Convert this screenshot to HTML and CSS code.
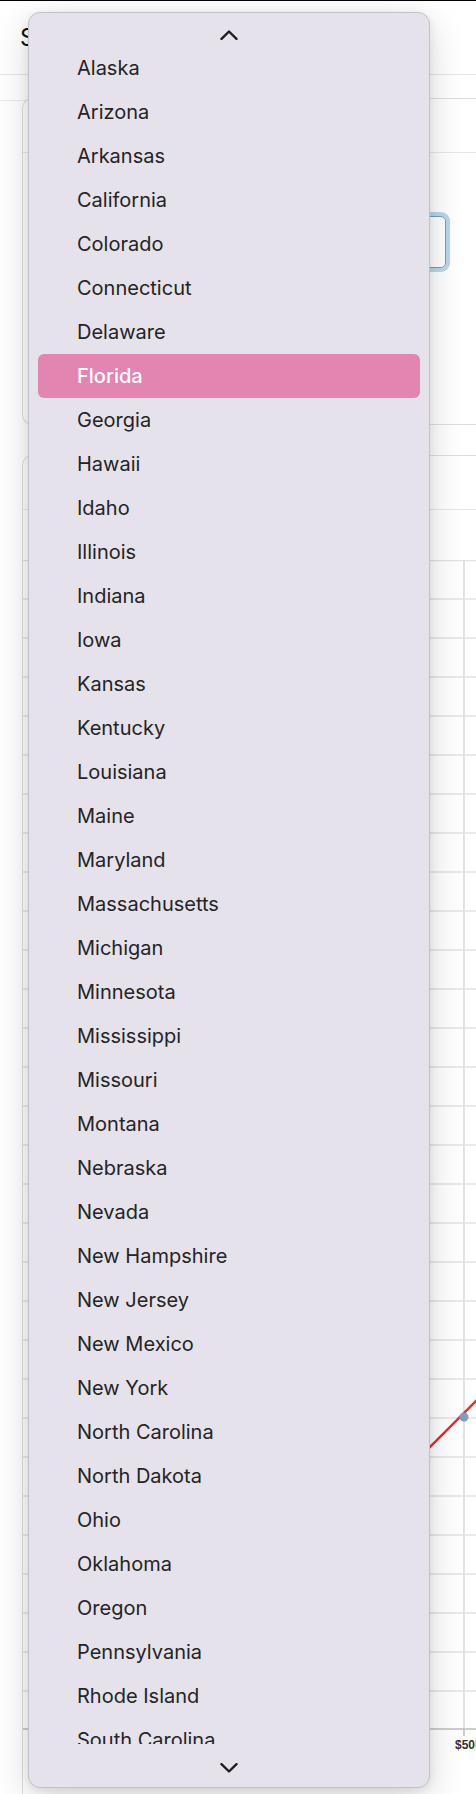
FILE: index.html
```html
<!DOCTYPE html>
<html lang="en">
<head>
<meta charset="utf-8">
<title>State Salary Comparison</title>
<link rel="stylesheet" href="styles.css">
</head>
<body>
<div class="page">
  <header class="topbar"><h1 class="title">State Salary Comparison</h1></header>
  <nav class="subbar"></nav>
  <main class="content">
    <section class="card card-filters">
      <div class="card-head"></div>
      <div class="filter-row">
        <div class="select-box">Florida</div>
      </div>
    </section>
    <section class="card card-chart">
      <div class="card-head card-head-chart"></div>
      <div class="chart">
        <svg class="chart-svg" width="460" height="1200" viewBox="0 0 460 1200">
          <g class="grid-h" stroke="#e2e2e2" stroke-width="1.5">
            <line x1="0" y1="0.5" x2="460" y2="0.5"/>
            <line x1="0" y1="39" x2="460" y2="39"/>
            <line x1="0" y1="78" x2="460" y2="78"/>
            <line x1="0" y1="117" x2="460" y2="117"/>
            <line x1="0" y1="156" x2="460" y2="156"/>
            <line x1="0" y1="195" x2="460" y2="195"/>
            <line x1="0" y1="234" x2="460" y2="234"/>
            <line x1="0" y1="273" x2="460" y2="273"/>
            <line x1="0" y1="312" x2="460" y2="312"/>
            <line x1="0" y1="351" x2="460" y2="351"/>
            <line x1="0" y1="390" x2="460" y2="390"/>
            <line x1="0" y1="429" x2="460" y2="429"/>
            <line x1="0" y1="468" x2="460" y2="468"/>
            <line x1="0" y1="507" x2="460" y2="507"/>
            <line x1="0" y1="546" x2="460" y2="546"/>
            <line x1="0" y1="585" x2="460" y2="585"/>
            <line x1="0" y1="624" x2="460" y2="624"/>
            <line x1="0" y1="663" x2="460" y2="663"/>
            <line x1="0" y1="702" x2="460" y2="702"/>
            <line x1="0" y1="741" x2="460" y2="741"/>
            <line x1="0" y1="780" x2="460" y2="780"/>
            <line x1="0" y1="819" x2="460" y2="819"/>
            <line x1="0" y1="858" x2="460" y2="858"/>
            <line x1="0" y1="897" x2="460" y2="897"/>
            <line x1="0" y1="936" x2="460" y2="936"/>
            <line x1="0" y1="975" x2="460" y2="975"/>
            <line x1="0" y1="1014" x2="460" y2="1014"/>
            <line x1="0" y1="1053" x2="460" y2="1053"/>
            <line x1="0" y1="1092" x2="460" y2="1092"/>
            <line x1="0" y1="1131" x2="460" y2="1131"/>
          </g>
          <line x1="441" y1="0" x2="441" y2="1170" stroke="#e2e2e2" stroke-width="2"/>
          <line x1="0" y1="1169" x2="460" y2="1169" stroke="#bdbdbd" stroke-width="1.5"/>
          <line x1="441" y1="1169" x2="441" y2="1176" stroke="#bdbdbd" stroke-width="1.5"/>
          <line x1="300" y1="994" x2="460" y2="834" stroke="#e0312b" stroke-width="2.5"/>
          <circle cx="441" cy="857" r="4.5" fill="#7f9cc6"/>
          <text x="432" y="1189" class="axis-label">$50k</text>
        </svg>
      </div>
    </section>
  </main>
</div>

<div class="menu">
  <div class="menu-arrow menu-arrow-up">
    <svg width="18" height="10" viewBox="0 0 18 10"><polyline points="1.5,8.8 9,1.5 16.5,8.8" fill="none" stroke="#1f1f1f" stroke-width="2.4" stroke-linecap="round" stroke-linejoin="round"/></svg>
  </div>
  <div class="menu-list">
    <div class="opt">Alaska</div>
    <div class="opt">Arizona</div>
    <div class="opt">Arkansas</div>
    <div class="opt">California</div>
    <div class="opt">Colorado</div>
    <div class="opt">Connecticut</div>
    <div class="opt">Delaware</div>
    <div class="opt opt-selected">Florida</div>
    <div class="opt">Georgia</div>
    <div class="opt">Hawaii</div>
    <div class="opt">Idaho</div>
    <div class="opt">Illinois</div>
    <div class="opt">Indiana</div>
    <div class="opt">Iowa</div>
    <div class="opt">Kansas</div>
    <div class="opt">Kentucky</div>
    <div class="opt">Louisiana</div>
    <div class="opt">Maine</div>
    <div class="opt">Maryland</div>
    <div class="opt">Massachusetts</div>
    <div class="opt">Michigan</div>
    <div class="opt">Minnesota</div>
    <div class="opt">Mississippi</div>
    <div class="opt">Missouri</div>
    <div class="opt">Montana</div>
    <div class="opt">Nebraska</div>
    <div class="opt">Nevada</div>
    <div class="opt">New Hampshire</div>
    <div class="opt">New Jersey</div>
    <div class="opt">New Mexico</div>
    <div class="opt">New York</div>
    <div class="opt">North Carolina</div>
    <div class="opt">North Dakota</div>
    <div class="opt">Ohio</div>
    <div class="opt">Oklahoma</div>
    <div class="opt">Oregon</div>
    <div class="opt">Pennsylvania</div>
    <div class="opt">Rhode Island</div>
    <div class="opt">South Carolina</div>
  </div>
  <div class="menu-arrow menu-arrow-down">
    <svg width="18" height="10" viewBox="0 0 18 10"><polyline points="1.5,1.2 9,8.5 16.5,1.2" fill="none" stroke="#1f1f1f" stroke-width="2.4" stroke-linecap="round" stroke-linejoin="round"/></svg>
  </div>
</div>
</body>
</html>
```

FILE: styles.css
```css
* { box-sizing: border-box; }

html, body {
  margin: 0;
  padding: 0;
  background: #ffffff;
}

body {
  width: 476px;
  height: 1794px;
  overflow: hidden;
  position: relative;
  font-family: Inter, "Noto Sans", "Liberation Sans", sans-serif;
  border-top: 1px solid #000;
}

.page {
  width: 476px;
}

.topbar {
  height: 74px;
  border-bottom: 1px solid #e6e6e6;
  display: flex;
  align-items: center;
  padding-left: 20px;
}

.title {
  margin: 0;
  font-size: 24px;
  font-weight: 400;
  color: #111;
  white-space: nowrap;
}

.subbar {
  height: 26px;
  border-bottom: 1px solid #ececec;
}

.content {
  padding-left: 22px;
  display: flex;
  flex-direction: column;
}

.card {
  width: 480px;
  border: 1px solid #dedede;
  border-right: none;
  border-radius: 10px 0 0 10px;
  background: #fff;
}

.card-filters {
  margin-top: -3px;
  height: 327px;
}

.card-head {
  height: 54px;
  border-bottom: 1px solid #e8e8e8;
}

.filter-row {
  display: flex;
  justify-content: flex-end;
  padding-top: 63px;
  padding-right: 56px;
}

.select-box {
  width: 300px;
  height: 52px;
  border: 1px solid #6f9fcb;
  border-radius: 5px;
  box-shadow: 0 0 0 4px #bcd6ea;
  font-size: 16px;
  line-height: 50px;
  padding-left: 12px;
  color: #222;
}

.card-chart {
  margin-top: 30px;
  height: 1400px;
}

.card-head-chart {
  height: 54px;
  border-bottom: 1px solid #e8e8e8;
  margin-bottom: 50px;
}

.chart {
  padding-left: 0;
}

.chart-svg {
  display: block;
}

.axis-label {
  font-family: "Liberation Sans", Arial, sans-serif;
  font-size: 12px;
  font-weight: 700;
  fill: #333;
}

/* popup menu */
.menu {
  position: absolute;
  left: 28px;
  top: 11px;
  width: 402px;
  height: 1776px;
  background: #e5e2ec;
  border: 1px solid #c3c1c8;
  border-radius: 12px;
  box-shadow: 0 10px 36px rgba(0, 0, 0, 0.16), 0 2px 10px rgba(0, 0, 0, 0.08);
  display: flex;
  flex-direction: column;
  overflow: hidden;
}

.menu-arrow {
  display: flex;
  justify-content: center;
  flex: none;
}

.menu-arrow svg {
  display: block;
}

.menu-arrow-up {
  height: 33px;
  align-items: flex-end;
  padding-bottom: 6px;
}

.menu-arrow-down {
  height: 43px;
  align-items: flex-start;
  padding-top: 19px;
}

.menu-list {
  height: 1698px;
  overflow: hidden;
  flex: none;
}

.opt {
  height: 44px;
  line-height: 44px;
  margin: 0 9px;
  padding-left: 39px;
  font-size: 20px;
  color: #242424;
  border-radius: 6px;
  white-space: nowrap;
}

.opt-selected {
  background: #e285b1;
  color: #ffffff;
  font-weight: 500;
}
```
